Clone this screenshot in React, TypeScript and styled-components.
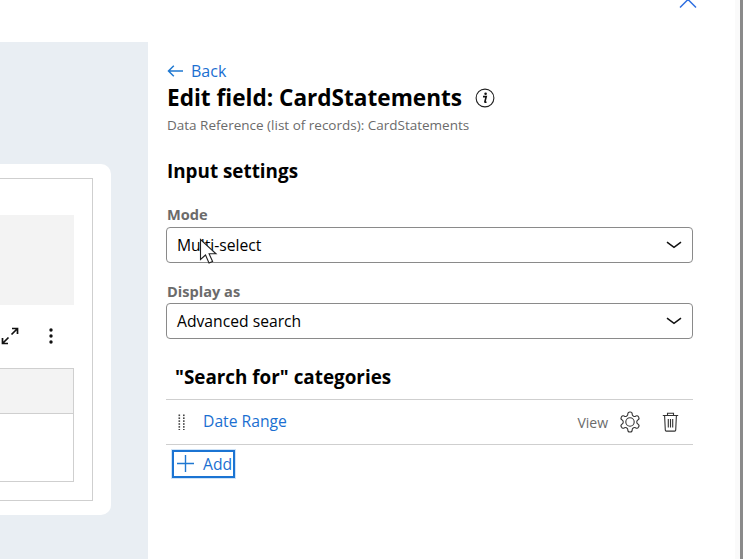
import React from "react";
import styled, { createGlobalStyle } from "styled-components";

const Global = createGlobalStyle`
  html, body { margin: 0; padding: 0; background: #fff; overflow: hidden; }
  body { font-family: "Open Sans", "Noto Sans", "Liberation Sans", sans-serif; }
  * { box-sizing: border-box; }
`;

const Page = styled.div`
  width: 743px;
  height: 559px;
  display: flex;
  flex-direction: column;
  position: relative;
  overflow: hidden;
  background: #fff;
`;

const TopBar = styled.div`
  height: 42px;
  flex: none;
  display: flex;
  justify-content: flex-end;
  padding-right: 46px;
`;

const Chevron = styled.svg`
  width: 18px;
  height: 10px;
  display: block;
`;

const Body = styled.div`
  flex: 1;
  display: flex;
  min-height: 0;
`;

const Canvas = styled.div`
  width: 148px;
  flex: none;
  background: #e9eef3;
  display: flex;
  justify-content: flex-end;
  padding: 122px 37px 44px 0;
  overflow: hidden;
`;

const Card = styled.div`
  width: 300px;
  flex: none;
  background: #fff;
  border-radius: 10px;
  padding: 14px 18px 14px 0;
  display: flex;
`;

const Frame = styled.div`
  flex: 1;
  border: 1px solid #cfcfcf;
  border-left: none;
  padding: 36px 18px 0 0;
  display: flex;
  flex-direction: column;
`;

const Placeholder = styled.div`
  height: 90px;
  background: #f3f3f3;
  flex: none;
`;

const Tools = styled.div`
  height: 63px;
  flex: none;
  display: flex;
  justify-content: flex-end;
  align-items: center;
  gap: 30px;
  padding: 0 21px 1px 0;
`;

const GridHead = styled.div`
  height: 46px;
  flex: none;
  background: #f3f3f3;
  border: 1px solid #cfcfcf;
  border-left: none;
`;

const GridBody = styled.div`
  height: 68px;
  flex: none;
  border: 1px solid #cfcfcf;
  border-width: 0 1px 1px 0;
`;

const Panel = styled.div`
  flex: 1;
  display: flex;
  flex-direction: column;
  padding: 17px 50px 0 18px;
`;

const BackLink = styled.a`
  display: flex;
  align-items: center;
  gap: 7px;
  height: 24px;
  margin-left: 1px;
  font-size: 16px;
  color: #1b6fd1;
`;

const TitleRow = styled.div`
  display: flex;
  align-items: center;
  gap: 13px;
  height: 30px;
  margin-left: 1px;
`;

const Title = styled.h1`
  margin: 0;
  font-size: 22.6px;
  line-height: 30px;
  font-weight: 700;
  color: #000;
`;

const Subtitle = styled.div`
  font-size: 13.5px;
  line-height: 18px;
  margin: 3px 0 0 1px;
  color: #6b6b6b;
`;

const SectionTitle = styled.h2`
  margin: 24px 0 0 1px;
  font-size: 18.85px;
  line-height: 26px;
  font-weight: 700;
  color: #000;
`;

const Label = styled.div<{ $top: number; $bottom: number }>`
  margin: ${(p) => p.$top}px 0 ${(p) => p.$bottom}px 1px;
  font-size: 14.6px;
  line-height: 18px;
  font-weight: 700;
  color: #6b6b6b;
`;

const Select = styled.div`
  margin-top: 4px;
  height: 36px;
  border: 1px solid #8a8a8a;
  border-radius: 4px;
  display: flex;
  align-items: center;
  justify-content: space-between;
  padding: 0 10px;
  font-size: 15.7px;
  color: #000;
`;

const CategoryTitle = styled.h2`
  margin: 25px 0 0;
  padding: 0 9px;
  height: 35px;
  font-size: 18.85px;
  line-height: 26px;
  font-weight: 700;
  color: #000;
`;

const Row = styled.div`
  height: 46px;
  border-top: 1px solid #cfcfcf;
  border-bottom: 1px solid #cfcfcf;
  display: flex;
  align-items: center;
  padding: 0 14px 0 12px;
`;

const RowLink = styled.a`
  margin-left: 17px;
  padding-bottom: 2px;
  flex: 1;
  font-size: 15.7px;
  color: #1b6fd1;
`;

const ViewLabel = styled.span`
  font-size: 14px;
  color: #6b6b6b;
  margin-right: 10px;
`;

const RowIcons = styled.div`
  display: flex;
  align-items: center;
  gap: 20px;
`;

const AddButton = styled.button`
  margin: 5px 0 0 6px;
  width: 63px;
  height: 28px;
  align-self: flex-start;
  display: flex;
  align-items: center;
  gap: 9px;
  padding: 0 0 1px 3px;
  background: #fff;
  border: 2px solid #1b74d3;
  box-shadow: 0 0 0 1px #cfe3f7;
  font-family: inherit;
  font-size: 15.7px;
  color: #1b6fd1;
`;

const Cursor = styled.svg`
  position: absolute;
  left: 199px;
  top: 238px;
  width: 20px;
  height: 27px;
`;

const ScrollEdge = styled.div`
  position: absolute;
  top: 0;
  right: 0;
  bottom: 0;
  width: 8px;
  background: #fafafa;
  border-right: 3px solid #8a8a8a;
`;

const SelectChevron = () => (
  <svg width="16" height="8" viewBox="0 0 16 8" fill="none">
    <path d="M1 1.2 8 6.4 15 1.2" stroke="#111" strokeWidth="1.5" />
  </svg>
);

export default function App() {
  return (
    <Page>
      <Global />
      <TopBar>
        <Chevron viewBox="0 0 18 10" fill="none">
          <path d="M1 7.5 9 -0.5 17 7.5" stroke="#2f6fe0" strokeWidth="1.5" />
        </Chevron>
      </TopBar>
      <Body>
        <Canvas>
          <Card>
            <Frame>
              <Placeholder />
              <Tools>
                <svg width="18" height="18" viewBox="0 0 18 18" fill="none" stroke="#111" strokeWidth="1.7">
                  <path d="M10.5 7.5 16.5 1.5M11 1.5h5.5V7M7.5 10.5l-6 6M1.5 11v5.5H7" />
                </svg>
                <svg width="4" height="16" viewBox="0 0 4 16" fill="#111">
                  <circle cx="2" cy="2" r="1.7" />
                  <circle cx="2" cy="8" r="1.7" />
                  <circle cx="2" cy="14" r="1.7" />
                </svg>
              </Tools>
              <GridHead />
              <GridBody />
            </Frame>
          </Card>
        </Canvas>
        <Panel>
          <BackLink>
            <svg width="17" height="12" viewBox="0 0 17 12" fill="none" stroke="#1f78d1" strokeWidth="1.5">
              <path d="M16 6H1.5M6.8 .8 1.5 6l5.3 5.2" />
            </svg>
            Back
          </BackLink>
          <TitleRow>
            <Title>Edit field: CardStatements</Title>
            <svg width="20" height="20" viewBox="0 0 20 20" fill="none">
              <circle cx="10" cy="10" r="8.9" stroke="#222" strokeWidth="1.1" />
              <circle cx="10.6" cy="5.8" r="1.3" fill="#111" />
              <path d="M8 8.6h3.2l-1.3 5.2c-.1.5.3.6 1.6.2" stroke="#111" strokeWidth="1.6" />
            </svg>
          </TitleRow>
          <Subtitle>Data Reference (list of records): CardStatements</Subtitle>
          <SectionTitle>Input settings</SectionTitle>
          <Label $top={21} $bottom={0}>Mode</Label>
          <Select>
            Multi-select
            <SelectChevron />
          </Select>
          <Label $top={19} $bottom={-1}>Display as</Label>
          <Select>
            Advanced search
            <SelectChevron />
          </Select>
          <CategoryTitle>"Search for" categories</CategoryTitle>
          <Row>
            <svg width="8" height="16" viewBox="0 0 8 16" fill="#444">
              {[0, 1, 2, 3, 4, 5].map((i) => (
                <React.Fragment key={i}>
                  <rect x="0.5" y={i * 2.9 + 0.5} width="1.6" height="1.6" />
                  <rect x="5" y={i * 2.9 + 0.5} width="1.6" height="1.6" />
                </React.Fragment>
              ))}
            </svg>
            <RowLink>Date Range</RowLink>
            <ViewLabel>View</ViewLabel>
            <RowIcons>
              <svg width="24" height="24" viewBox="0 0 24 24" fill="none" stroke="#333" strokeWidth="1.1" strokeLinejoin="round">
                <path d="M12.2 2h-.4a2 2 0 0 0-2 2v.2a2 2 0 0 1-1 1.7l-.4.3a2 2 0 0 1-2 0l-.2-.1a2 2 0 0 0-2.7.7l-.2.4a2 2 0 0 0 .7 2.7l.2.1a2 2 0 0 1 1 1.7v.5a2 2 0 0 1-1 1.8l-.2.1a2 2 0 0 0-.7 2.7l.2.4a2 2 0 0 0 2.7.7l.2-.1a2 2 0 0 1 2 0l.4.3a2 2 0 0 1 1 1.7v.2a2 2 0 0 0 2 2h.4a2 2 0 0 0 2-2v-.2a2 2 0 0 1 1-1.7l.4-.3a2 2 0 0 1 2 0l.2.1a2 2 0 0 0 2.7-.7l.2-.4a2 2 0 0 0-.7-2.7l-.2-.1a2 2 0 0 1-1-1.8v-.5a2 2 0 0 1 1-1.7l.2-.1a2 2 0 0 0 .7-2.7l-.2-.4a2 2 0 0 0-2.7-.7l-.2.1a2 2 0 0 1-2 0l-.4-.3a2 2 0 0 1-1-1.7V4a2 2 0 0 0-2-2z" />
                <circle cx="12" cy="12" r="4.2" />
              </svg>
              <svg width="17" height="20" viewBox="0 0 17 20" fill="none" stroke="#333" strokeWidth="1.1">
                <path d="M.8 3.5h15.4M5.5 3.3V1.3h6v2M2.6 3.7l.7 14.4c0 .6.4 1 1 1h8.4c.6 0 1-.4 1-1l.7-14.4" />
                <path d="M6.3 7v8.5M8.5 7v8.5M10.7 7v8.5" />
              </svg>
            </RowIcons>
          </Row>
          <AddButton>
            <svg width="17" height="17" viewBox="0 0 17 17" stroke="#1f78d1" strokeWidth="1.4">
              <path d="M8.5 0v17M0 8.5h17" />
            </svg>
            Add
          </AddButton>
        </Panel>
      </Body>
      <ScrollEdge />
      <Cursor viewBox="0 0 20 27">
        <path d="M1.5 1.5v20l5-4.5 3.5 8 3.6-1.6-3.5-7.6H17z" fill="#fff" stroke="#222" strokeWidth="1.1" />
      </Cursor>
    </Page>
  );
}
